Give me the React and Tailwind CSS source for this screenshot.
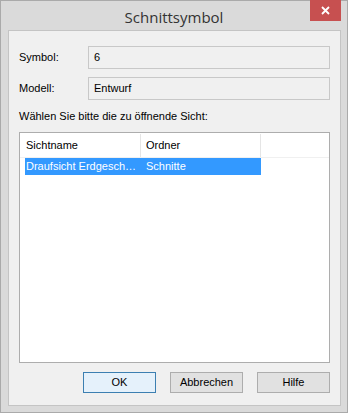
import React from 'react';

const font = { fontFamily: '"Liberation Sans", Arial, sans-serif' };

const Field = ({ label, value }) => (
  <div className="flex items-center h-[23px]">
    <span className="w-[69px] text-[11px] text-[#000]">{label}</span>
    <div className="h-[23px] w-[242px] border border-[#c8c8c8] bg-[#f0f0f0] pl-[5px] pt-[3px] text-[11px] text-[#000] leading-[14px]">
      {value}
    </div>
  </div>
);

const Button = ({ children, primary }) => (
  <button
    className={
      primary
        ? 'h-[21px] w-[73px] border border-[#3c7fb1] bg-[#e5f1fb] text-[11px] text-[#000] outline outline-1 -outline-offset-2 outline-[#e5f1fb]'
        : 'h-[21px] w-[73px] border border-[#adadad] bg-[#e1e1e1] text-[11px] text-[#000]'
    }
  >
    {children}
  </button>
);

export default function App() {
  return (
    <div
      className="w-[348px] h-[413px] border border-[#aaaaaa] bg-[#dadada] flex flex-col"
      style={font}
    >
      <div className="relative h-[29px] flex items-start justify-center">
        <span className="mt-[5px] text-[15px] text-[#333333]" style={{ fontFamily: '"Open Sans", sans-serif' }}>
          Schnittsymbol
        </span>
        <div className="absolute right-[6px] top-[-1px] w-[31px] h-[21px] bg-[#c75050] flex items-center justify-center">
          <svg width="9" height="9" viewBox="0 0 9 9">
            <path d="M1 1 L8 8 M8 1 L1 8" stroke="#ffffff" strokeWidth="1.8" />
          </svg>
        </div>
      </div>
      <div className="ml-[7px] w-[333px] h-[376px] border border-[#c4c4c4] bg-[#f0f0f0] pl-[10px] pt-[15px] flex flex-col">
        <div className="flex flex-col gap-[8px]">
          <Field label="Symbol:" value="6" />
          <Field label="Modell:" value="Entwurf" />
        </div>
        <div className="mt-[9px] text-[11px] text-[#000] leading-[14px]">Wählen Sie bitte die zu öffnende Sicht:</div>
        <div className="mt-[9px] w-[311px] h-[231px] border border-[#adadad] bg-white pt-[1px]">
          <div className="flex h-[24px] text-[11px] text-[#000] border-b border-[#f0f0f0]">
            <div className="w-[121px] pl-[6px] flex items-center border-r border-[#e5e5e5]">Sichtname</div>
            <div className="w-[120px] pl-[5px] flex items-center border-r border-[#e5e5e5]">Ordner</div>
          </div>
          <div className="ml-[5px] flex h-[17px] w-[236px] bg-[#3399ff] text-[11px] text-white items-center">
            <div className="w-[115px] pl-[1px] whitespace-nowrap">Draufsicht Erdgesch…</div>
            <div className="pl-[6px]">Schnitte</div>
          </div>
        </div>
        <div className="mt-[9px] flex gap-[14px] pl-[64px]">
          <Button primary>OK</Button>
          <Button>Abbrechen</Button>
          <Button>Hilfe</Button>
        </div>
      </div>
    </div>
  );
}
